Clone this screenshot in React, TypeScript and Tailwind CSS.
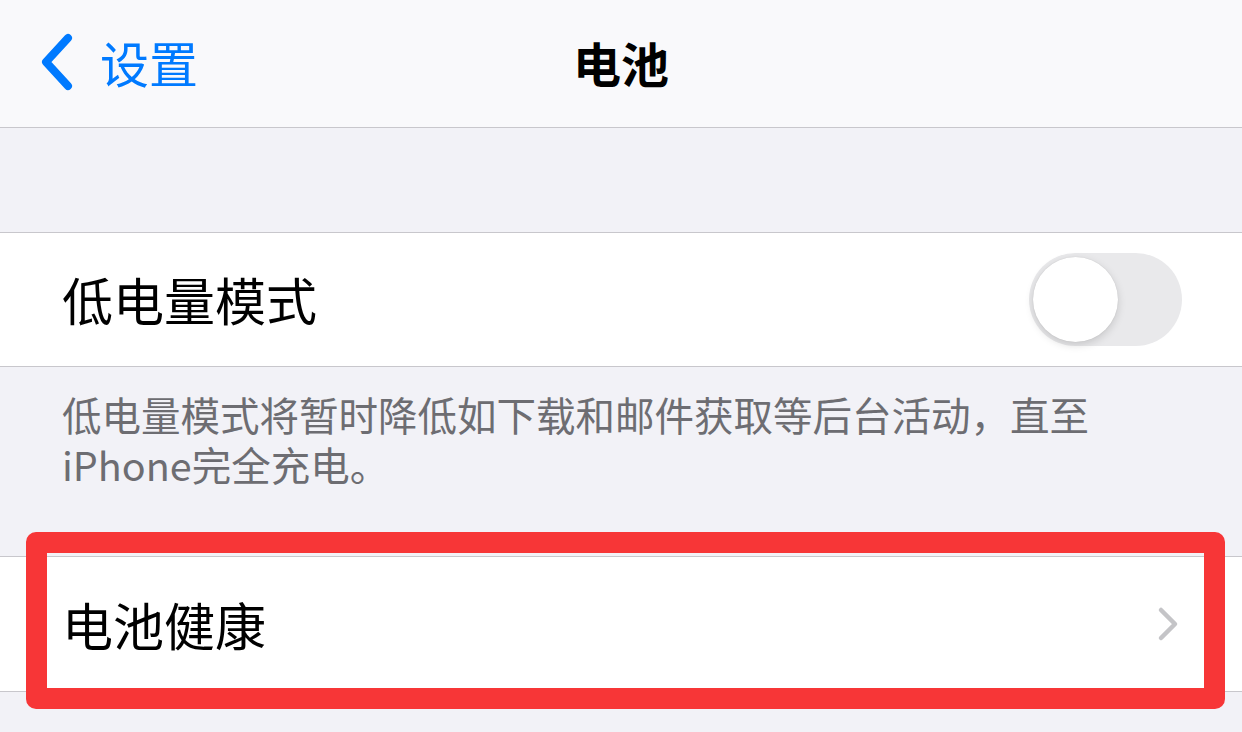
import React from "react";

const font = { fontFamily: '"Noto Sans CJK SC", "Noto Sans", sans-serif' };

export default function App() {
  return (
    <div className="w-[1242px] h-[732px] overflow-hidden bg-[#f2f2f7] flex flex-col" style={font}>
      {/* Nav bar */}
      <div className="h-[128px] shrink-0 bg-[#f9f9fb] border-b border-[#c8c7cc] relative flex items-center">
        <div className="flex items-center pl-[38px] gap-[24px] text-[#007aff]">
          <svg width="38" height="58" viewBox="0 0 38 58" className="mb-[4px]">
            <path d="M30 5 L8 29 L30 53" fill="none" stroke="#007aff" strokeWidth="8" strokeLinecap="round" strokeLinejoin="round" />
          </svg>
          <span className="text-[49px] leading-none mb-[4px]">设置</span>
        </div>
        <div className="absolute left-0 right-0 top-0 bottom-0 flex items-center justify-center pointer-events-none">
          <span className="text-[48px] leading-none font-semibold text-black mb-[4px]">电池</span>
        </div>
      </div>

      {/* spacer */}
      <div className="h-[104px] shrink-0" />

      {/* Low power mode row */}
      <div className="h-[135px] shrink-0 bg-white border-y border-[#c8c7cc] flex items-center justify-between pl-[62px] pr-[60px]">
        <span className="text-[51px] leading-none text-black">低电量模式</span>
        <div className="w-[153px] h-[93px] rounded-full bg-[#e9e9eb] p-[4px] flex items-center">
          <div className="w-[85px] h-[85px] rounded-full bg-white shadow-[0_3px_8px_rgba(0,0,0,0.15),0_0_1px_rgba(0,0,0,0.16)]" />
        </div>
      </div>

      {/* footer */}
      <div className="h-[189px] shrink-0 pl-[62px] pr-[100px] pt-[22px] text-[39.5px] text-[#6d6d72] flex flex-col">
        <div className="h-[50px] leading-[50px]">低电量模式将暂时降低如下载和邮件获取等后台活动，直至</div>
        <div className="h-[50px] leading-[50px]">iPhone完全充电。</div>
      </div>

      {/* battery health row */}
      <div className="h-[136px] shrink-0 bg-white border-y border-[#c8c7cc] flex items-center justify-between pl-[62px] pr-[62px] relative">
        <span className="text-[51px] leading-none text-black">电池健康</span>
        <svg width="24" height="36" viewBox="0 0 24 36">
          <path d="M5 4 L19 18 L5 32" fill="none" stroke="#c4c4c7" strokeWidth="4.5" strokeLinecap="round" strokeLinejoin="round" />
        </svg>
        <div className="absolute left-[26px] top-[-25px] w-[1199px] h-[177px] border-[21px] border-[#f73637] rounded-[10px] pointer-events-none" />
      </div>
    </div>
  );
}
